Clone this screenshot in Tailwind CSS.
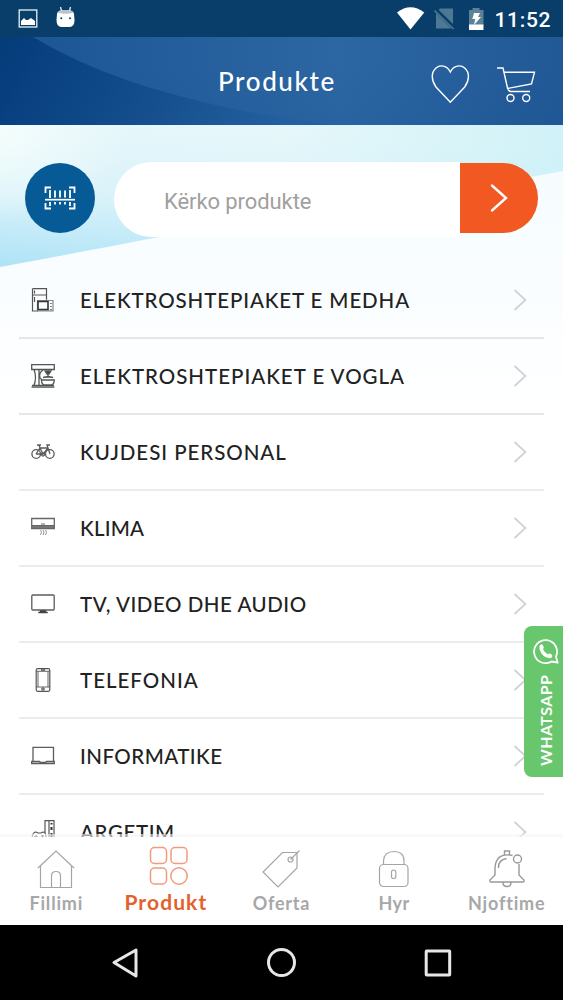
<!DOCTYPE html>
<html lang="sq">
<head>
<meta charset="utf-8">
<title>Produkte</title>
<script src="https://cdn.jsdelivr.net/npm/@tailwindcss/browser@4"></script>
</head>
<body class="w-[563px] h-[1000px] overflow-hidden bg-white font-[Lato,sans-serif]">
<div class="relative flex flex-col w-[563px] h-[1000px]">
  <header class="h-[37px] shrink-0 bg-[#083e69] flex items-center text-white">
    <svg class="w-[563px] h-[37px]" viewBox="0 0 563 37" fill="none">
      <rect x="19.2" y="10" width="17.6" height="17" stroke="#e8f4f8" stroke-width="1.3"/>
      <path d="M21 25v-4l3-3 2 2 2 0 3-2 4 3v4z" fill="#fff"/>
      <path d="M57 14q0-3 5-3h7q5 0 5 3l.5 6q0 7-5 7h-8q-5 0-5-7z" fill="#fff"/>
      <path d="M57.5 12.5q1-2.5 5-2.5h6q4 0 5 2.5-8 2.500-16 0z" fill="#b5c4c8"/>
      <path d="M61.500 11l-1-4M69.500 11l1-4" stroke="#e3edf2" stroke-width="1.3"/>
      <circle cx="61.300" cy="18.300" r="1" fill="#083e69"/><circle cx="70" cy="18.300" r="1" fill="#083e69"/>
      <path d="M397 12.500q13.500-10.500 27.300 0L410.500 29.500z" fill="#fff"/>
      <path d="M440 8.500H453v15.500L438.500 9.800zM436 13v15.500h15.500z" fill="#4d7893"/>
      <path d="M434.500 10.500l19 18.500" stroke="#4d7893" stroke-width="1.700"/>
      <path d="M469 10h3.500V8h7v2h4v15h-14.500z" fill="#5d8199"/>
      <path d="M469 24.500h14.500V30H469z" fill="#fff"/>
      <path d="M474 13h6l-2 4h3l-7 8 1.300-6h-3z" fill="#fff"/>
      <text x="494.500" y="27" font-family="Roboto" font-size="21" font-weight="500" fill="#fff" textLength="56">11:52</text>
    </svg>
  </header>
  <div class="relative h-[88px] shrink-0">
    <svg class="absolute inset-0" width="563" height="88" viewBox="0 0 563 88" fill="none">
      <defs>
        <linearGradient id="h1"><stop offset="0" stop-color="#1b5494"/><stop offset=".6" stop-color="#2c67a3"/><stop offset="1" stop-color="#215896"/></linearGradient>
        <linearGradient id="h2" x2="1" y2=".15"><stop offset="0" stop-color="#053b78"/><stop offset=".15" stop-color="#084080"/><stop offset=".6" stop-color="#16508f"/><stop offset="1" stop-color="#2460a0"/></linearGradient>
        <linearGradient id="h3" x1="0" y1="0" x2="0" y2="1"><stop offset=".3" stop-color="#164f92" stop-opacity="0"/><stop offset="1" stop-color="#164f92" stop-opacity=".15"/></linearGradient>
      </defs>
      <path fill="url(#h1)" d="M0 0h563v88H0z"/>
      <path fill="url(#h3)" d="M0 0h563v88H0z"/>
      <path fill="url(#h2)" d="M0 0H33Q90 34 165 55T284 80L330 88H0z"/>
    </svg>
    <div class="relative h-full flex items-center">
      <h1 class="w-[555px] pl-[218px] text-[26px] leading-[30px] font-medium tracking-[1.6px] text-white">Produkte</h1>
    </div>
    <svg class="absolute right-0 top-0" width="150" height="88" viewBox="413 37 150 88" fill="none" stroke="#fff" stroke-width="1.400">
      <path d="M450.300 72C447 65 440 64.500 436 68c-5 4.500-5 12 0 19l14.300 15.300L464.700 87c5-7 5-14.500 0-19-4-3.500-11-3-14.400 4z"/>
      <path d="M497 68h6l4.500 20q1 3.500 3.500 3.500h19M504 72.300H534.500L531.500 84l-24 4.500"/>
      <circle cx="510.500" cy="98" r="3.500"/><circle cx="526.200" cy="98" r="3.500"/>
    </svg>
  </div>
  <main class="relative h-[712px] shrink-0 overflow-hidden">
    <svg class="absolute inset-0" width="563" height="712" viewBox="0 0 563 712">
      <defs>
        <linearGradient id="s1" x1=".25" y1="0" x2="0" y2="1"><stop offset="0" stop-color="#e6f7fa"/><stop offset=".5" stop-color="#d9f2fa"/><stop offset="1" stop-color="#aee3f6"/></linearGradient>
        <radialGradient id="s0" gradientUnits="userSpaceOnUse" cx="0" cy="10" r="130" gradientTransform="scale(1 .7)"><stop offset="0" stop-color="#f4fdfc"/><stop offset="1" stop-color="#f4fdfc" stop-opacity="0"/></radialGradient>
        <linearGradient id="s2" x1="0" x2="0" y2="1"><stop offset="0" stop-color="#f4fcfe"/><stop offset=".5" stop-color="#f9fdff"/><stop offset="1" stop-color="#fff"/></linearGradient>
        <linearGradient id="s3" x1="0" x2="1"><stop offset=".5" stop-color="#c4eff6" stop-opacity="0"/><stop offset="1" stop-color="#c4eff6" stop-opacity=".65"/></linearGradient>
      </defs>
      <path fill="url(#s2)" d="M0 0h563v290H0z"/>
      <path fill="url(#s1)" d="M0 0H563V46Q450 67 300 89C220 98 160 113 0 142z"/>
      <path fill="url(#s0)" d="M0 0h200v120H0z"/>
      <path fill="url(#s3)" d="M0 0H563V46Q450 67 300 89z"/>
    </svg>
    <div class="relative h-[138px] pt-[37px] pl-[25px] flex items-start">
      <button class="mt-px size-[70px] rounded-full bg-[#065b97] flex items-center justify-center">
        <svg width="34" height="26" viewBox="0 0 34 26" fill="none" stroke="#fff" stroke-width="1.800">
          <path d="M2.500 8V2.500H8M26 2.500h5.500V8M2.500 18v5.500H8M26 23.500h5.500V18"/>
          <path d="M2 14.700h30" stroke-width="1.700"/>
          <path d="M7 5v8M12 5.500v7M17 5.500v7M22 5.500v7M27 5v8M7 17v4M12 17v2.500M17 17v2.500M22 17v2.500M27 17v4"/>
        </svg>
      </button>
      <div class="ml-[19px] w-[346px] h-[75px] rounded-l-full bg-white pl-[50px] pt-[3px] flex items-center font-[Roboto,sans-serif] text-[22px] tracking-[-0.08px] text-[#a0a0a0] whitespace-nowrap">Kërko produkte</div>
      <button class="mt-px w-[78px] h-[70px] rounded-r-[35px] bg-[#f15822] flex items-center justify-center">
        <svg width="20" height="30" viewBox="0 0 20 30" fill="none" stroke="#fff" stroke-width="2.400" stroke-linecap="round"><path d="M3 2.500l14 12.500-14 12.500"/></svg>
      </button>
    </div>
    <ul class="relative mx-[19px] w-[525px] text-[20.5px] font-medium text-[#222]">
      <li class="h-[76px] flex items-center border-b-2 border-[#e5e6e9] pl-[12px]">
        <svg class="mr-[25px]" width="24" height="24" viewBox="0 0 24 24" fill="none" stroke="#555" stroke-width="1.200"><path d="M1.500.7h14v11M1.500.7V23H7M1 7h15M3.500 2.500v3M3.500 9v5" /><path d="M6.500 12.500h15.500v10.300H6.500z" stroke="#888"/><path d="M7 13.500h10v8H7z" stroke="#333" stroke-width="1.600"/><path d="M20 15v1M20 18v1M20 21v1" stroke="#333"/></svg>
        <span class="flex-1 tracking-[0.89px]">ELEKTROSHTEPIAKET E MEDHA</span>
        <svg class="mr-[16px]" width="16" height="22" viewBox="0 0 16 22" fill="none" stroke="#cfd1d3" stroke-width="1.700"><path d="M2.500 1l11 10-11 10"/></svg>
      </li>
      <li class="h-[76px] flex items-center border-b-2 border-[#e5e6e9] pl-[12px]">
        <svg class="mr-[25px]" width="24" height="24" viewBox="0 0 24 24" fill="none" stroke="#555" stroke-width="1.300"><path d="M.7.700h22.600V5.500H.7zM.5 23.200h23M1 21.500h22M3 5.500q3 8 0 16M8 6v15.500M12 6Q7.500 9 9 14l2 2M10.500 16h12.800q0 4-3 5h-7q-3-1-2.800-5z"/><path d="M14 7h6l-2 3h-2zM17 10v3M12 13.500l5-1 5 1" fill="#444"/></svg>
        <span class="flex-1 tracking-[0.99px]">ELEKTROSHTEPIAKET E VOGLA</span>
        <svg class="mr-[16px]" width="16" height="22" viewBox="0 0 16 22" fill="none" stroke="#cfd1d3" stroke-width="1.700"><path d="M2.500 1l11 10-11 10"/></svg>
      </li>
      <li class="h-[76px] flex items-center border-b-2 border-[#ebecee] pl-[12px]">
        <svg class="mr-[25px]" width="24" height="24" viewBox="0 0 24 24" fill="none" stroke="#5b5b5b" stroke-width="1.300"><circle cx="5.200" cy="14" r="4.300"/><circle cx="18.800" cy="14" r="4.300"/><circle cx="12" cy="14.500" r="1.500"/><path d="M5 14l4-6 3 6 5-6 2 6M6 5h4M8 5l1 3h8l-1-3h3M5 14h7"/></svg>
        <span class="flex-1 tracking-[0.95px]">KUJDESI PERSONAL</span>
        <svg class="mr-[16px]" width="16" height="22" viewBox="0 0 16 22" fill="none" stroke="#cfd1d3" stroke-width="1.700"><path d="M2.500 1l11 10-11 10"/></svg>
      </li>
      <li class="h-[76px] flex items-center border-b-2 border-[#ebecee] pl-[12px]">
        <svg class="mr-[25px]" width="24" height="24" viewBox="0 0 24 24" fill="none" stroke="#666"><path d="M.7 2.500h22.600v10H.7z" stroke-width="1.300"/><path d="M1 9.500h22v3H1z" fill="#777"/><path d="M10 8h4"/><path d="M9.500 14l1 2-1 3M12 14l1 2-1 3M14.500 14l1 2-1 3" stroke="#999" stroke-width="1"/></svg>
        <span class="flex-1 tracking-[0.2px]">KLIMA</span>
        <svg class="mr-[16px]" width="16" height="22" viewBox="0 0 16 22" fill="none" stroke="#cfd1d3" stroke-width="1.700"><path d="M2.500 1l11 10-11 10"/></svg>
      </li>
      <li class="h-[76px] flex items-center border-b-2 border-[#ebecee] pl-[12px]">
        <svg class="mr-[25px]" width="24" height="24" viewBox="0 0 24 24" fill="none" stroke="#5c5c5c" stroke-width="1.300"><rect x=".8" y="3" width="22.400" height="15" rx="1"/><path d="M9 18.500h6v1.500h1.500v1h-9v-1H9z" fill="#444" stroke="#444" stroke-width=".5"/></svg>
        <span class="flex-1 tracking-[0.54px]">TV, VIDEO DHE AUDIO</span>
        <svg class="mr-[16px]" width="16" height="22" viewBox="0 0 16 22" fill="none" stroke="#cfd1d3" stroke-width="1.700"><path d="M2.500 1l11 10-11 10"/></svg>
      </li>
      <li class="h-[76px] flex items-center border-b-2 border-[#ebecee] pl-[12px]">
        <svg class="mr-[25px]" width="24" height="24" viewBox="0 0 24 24" fill="none" stroke="#555" stroke-width="1.200"><rect x="5.200" y=".7" width="13.600" height="22.600" rx="1.500"/><path d="M5 3.300h14M5 19h14M7 3.500V19M17 3.500V19" stroke-width=".9"/><path d="M10 2h4" stroke-width="1.500"/><circle cx="12" cy="21" r="1.200"/></svg>
        <span class="flex-1 tracking-[1px]">TELEFONIA</span>
        <svg class="mr-[16px]" width="16" height="22" viewBox="0 0 16 22" fill="none" stroke="#cfd1d3" stroke-width="1.700"><path d="M2.500 1l11 10-11 10"/></svg>
      </li>
      <li class="h-[76px] flex items-center border-b-2 border-[#ebecee] pl-[12px]">
        <svg class="mr-[25px]" width="24" height="24" viewBox="0 0 24 24" fill="none" stroke="#5c5c5c" stroke-width="1.300"><path d="M2 17.500V3.300h20.500v14.200M.7 17.500h7.800l1 1h5l1-1h7.800v2H.7z"/></svg>
        <span class="flex-1 tracking-[0.46px]">INFORMATIKE</span>
        <svg class="mr-[16px]" width="16" height="22" viewBox="0 0 16 22" fill="none" stroke="#cfd1d3" stroke-width="1.700"><path d="M2.500 1l11 10-11 10"/></svg>
      </li>
      <li class="h-[76px] flex items-center border-b-2 border-[#ebecee] pl-[12px]">
        <svg class="mr-[25px]" width="24" height="24" viewBox="0 0 24 24" fill="none" stroke="#555" stroke-width="1.200"><path d="M14 13V.7h4v18M18 .7h5v22h-5zM1 20q0-8 4-8l2 1h3l2-1q3 0 3 6M3.500 16.500h3M5 15v3"/><path d="M20.500 3v1.500M20.500 7v3M20.500 13v4M11.500 15v3" stroke="#333" stroke-width="2"/></svg>
        <span class="flex-1 tracking-[0.6px]">ARGETIM</span>
        <svg class="mr-[16px]" width="16" height="22" viewBox="0 0 16 22" fill="none" stroke="#cfd1d3" stroke-width="1.700"><path d="M2.500 1l11 10-11 10"/></svg>
      </li>
    </ul>
    <div class="absolute bottom-0 left-0 w-full h-[3px] bg-[#f4f5f7]/60"></div>
  </main>
  <nav class="h-[88px] shrink-0 bg-white grid grid-cols-5 text-[#a7a7a9] text-[18px] leading-[22px] font-bold text-center">
    <div class="flex flex-col items-center pt-[12px]">
      <svg width="40" height="40" viewBox="0 0 40 40" fill="none" stroke="#a5a5a5" stroke-width="1.200"><path d="M2 19L20 2l18 17M4.500 17v21.500h31V17M15.500 38.500V27q0-4.500 4.500-4.500t4.500 4.500v11.500"/></svg>
      <span class="mt-[3px] tracking-[0.8px]">Fillimi</span>
    </div>
    <div class="flex flex-col items-center pt-[9px] text-[#e3622c] -ml-[6px]">
      <svg class="ml-[6px]" width="40" height="40" viewBox="0 0 40 40" fill="none" stroke="#f29a7c" stroke-width="1.500"><rect x="1.500" y="1.500" width="16" height="16" rx="4"/><rect x="22" y="1.500" width="16" height="16" rx="4"/><rect x="1.500" y="22" width="16" height="16" rx="4"/><circle cx="30" cy="30" r="8.200"/></svg>
      <span class="mt-[4px] text-[21px] leading-[24px] tracking-[1.1px]">Produkt</span>
    </div>
    <div class="flex flex-col items-center pt-[12px]">
      <svg width="40" height="40" viewBox="0 0 40 40" fill="none" stroke="#a5a5a5" stroke-width="1.200"><path d="M21.500 3.500H36v15.500L17 38 2 23z"/><circle cx="29.500" cy="10.500" r="2.500"/><path d="M29.500 10.500L38.500 1.500"/></svg>
      <span class="mt-[3px] tracking-[0.8px]">Oferta</span>
    </div>
    <div class="flex flex-col items-center pt-[12px]">
      <svg width="40" height="40" viewBox="0 0 40 40" fill="none" stroke="#a5a5a5" stroke-width="1.200"><rect x="5.500" y="15.500" width="28.500" height="22" rx="4"/><path d="M9.500 15.500V12Q10 2.500 20 2.500T30 12v3.500"/><rect x="17.500" y="21" width="4.300" height="8.500" rx="2.100"/></svg>
      <span class="mt-[3px] tracking-[0.5px]">Hyr</span>
    </div>
    <div class="flex flex-col items-center pt-[12px]">
      <svg width="40" height="40" viewBox="0 0 40 40" fill="none" stroke="#999" stroke-width="1.400"><path d="M25.500 6.500Q9 3 8 19v7l-5 5q-.5 2 1 2h32q1.500 0 1-2l-5-5V15M17.500 5.500V2h5v3.500M16 33.500q0 4 4 4t4-4M11.500 19q-.5-8 8-9.500"/><circle cx="30.500" cy="10" r="4"/></svg>
      <span class="mt-[3px] tracking-[0.8px]">Njoftime</span>
    </div>
  </nav>
  <footer class="h-[75px] shrink-0 bg-black">
    <svg width="563" height="75" viewBox="0 0 563 75" fill="none" stroke="#e8e6e9" stroke-width="3" stroke-linejoin="round"><path d="M136 25v26L114 37.500z"/><circle cx="281.500" cy="37.500" r="13"/><rect x="426.200" y="26" width="23.500" height="24" rx=".5"/></svg>
  </footer>
  <aside class="absolute right-0 top-[626px] w-[39px] h-[151px] rounded-l-[8px] bg-[#68c66c] flex flex-col items-center pt-[12px] text-white">
    <svg class="ml-[3px]" width="27" height="27" viewBox="0 0 27 27" fill="none" stroke="#fff" stroke-width="1.800"><path d="M25.500 24.500l-6-1A11.500 11.500 0 1 1 24 18.500z"/><path d="M7.500 8q2-3 3.500-.5t0 3.500q1.500 4 5 5.500 1.500-2 4 .5 1 2-1.500 3.200Q10 20 7.500 11z" fill="#fff" stroke="none"/></svg>
    <div class="mt-[8px] ml-[4px] h-[94px] [writing-mode:vertical-rl] rotate-180 text-[16px] leading-[20px] tracking-[0.4px] font-bold text-center whitespace-nowrap">WHATSAPP</div>
  </aside>
</div>
</body>
</html>
